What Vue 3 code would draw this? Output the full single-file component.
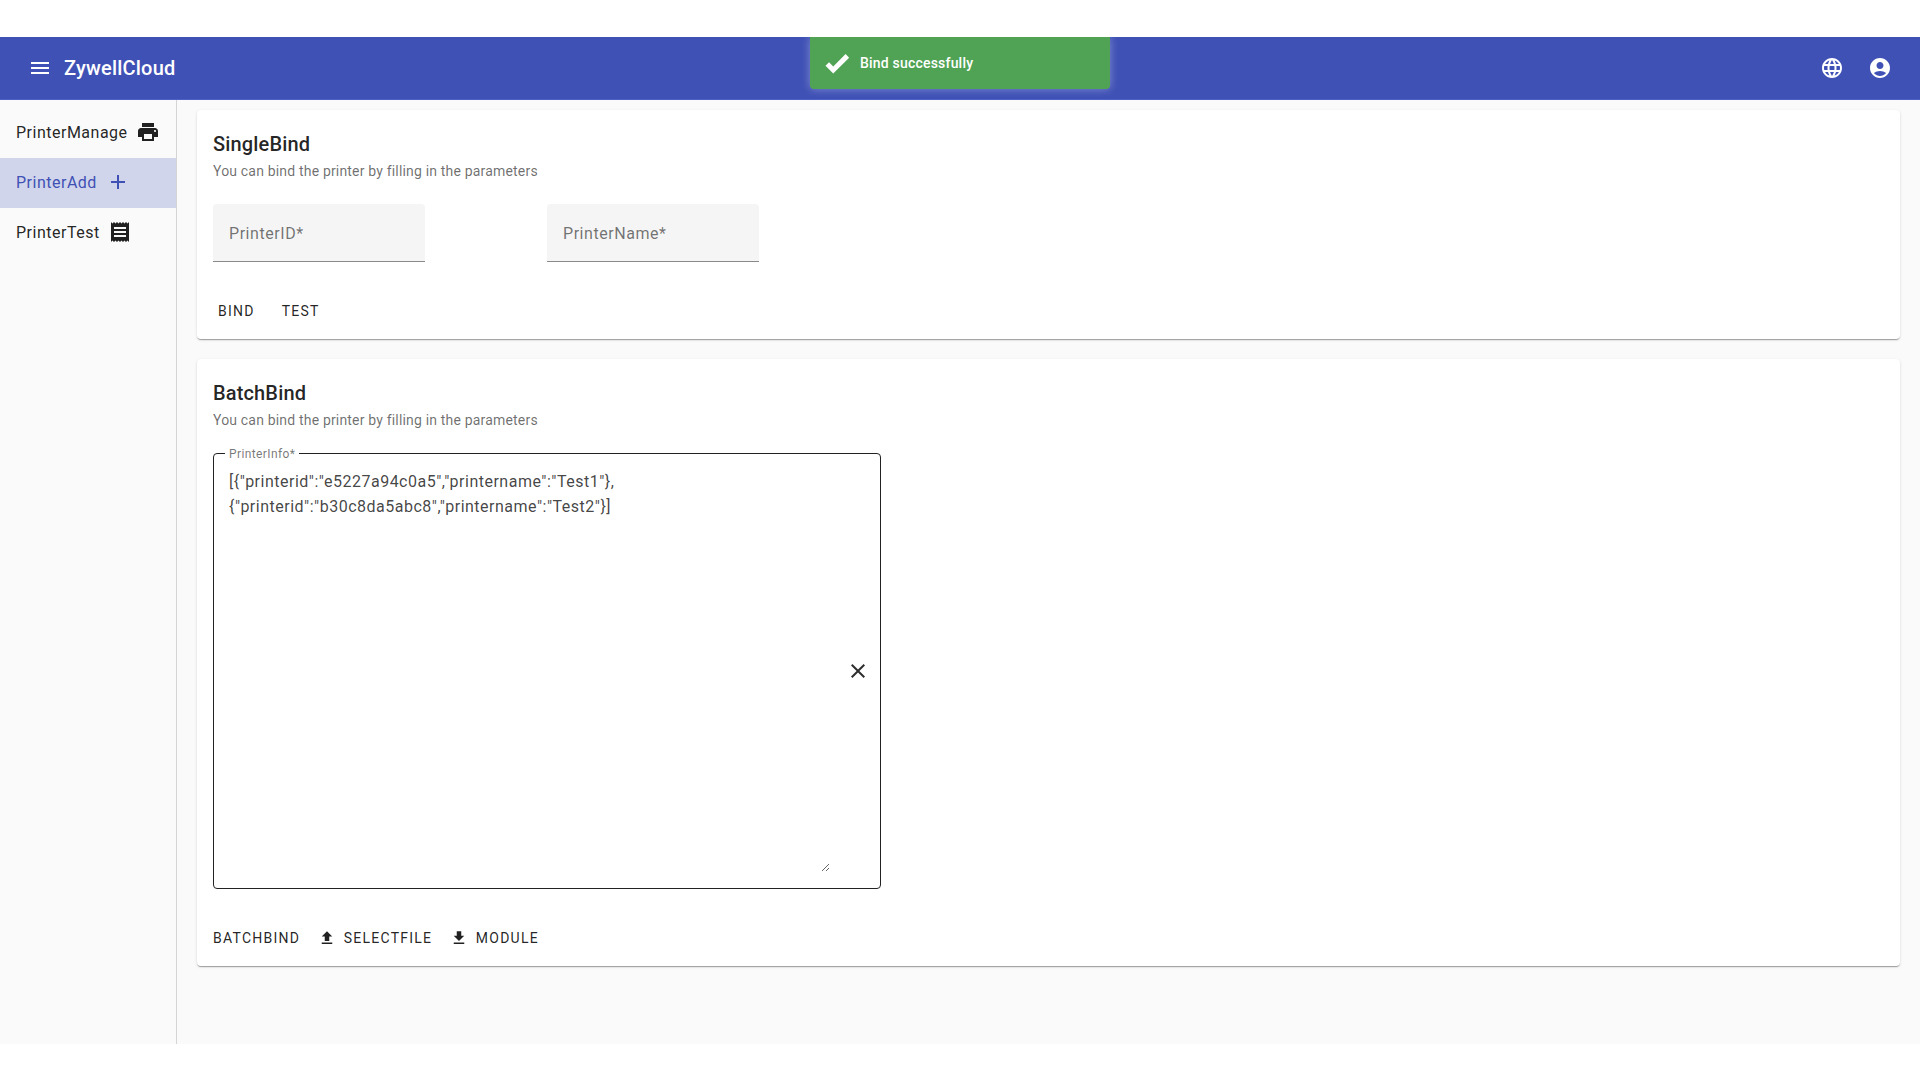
<script setup>
const items = [
  { label: 'PrinterManage', icon: 'M19 8H5c-1.66 0-3 1.34-3 3v6h4v4h12v-4h4v-6c0-1.66-1.34-3-3-3zm-3 11H8v-5h8v5zm3-7c-.55 0-1-.45-1-1s.45-1 1-1 1 .45 1 1-.45 1-1 1zm-1-9H6v4h12V3z', cls: 'first' },
  { label: 'PrinterAdd', icon: 'M19 13h-6v6h-2v-6H5v-2h6V5h2v6h6v2z', cls: 'active' },
  { label: 'PrinterTest', icon: 'M3 22l1.5-1.5L6 22l1.5-1.5L9 22l1.5-1.5L12 22l1.5-1.5L15 22l1.5-1.5L18 22l1.5-1.5L21 22V2l-1.5 1.5L18 2l-1.5 1.5L15 2l-1.5 1.5L12 2l-1.5 1.5L9 2 7.5 3.5 6 2 4.5 3.5 3 2v20zM18 17H6v-2h12v2zm0-4H6v-2h12v2zm0-4H6V7h12v2z', cls: '' }
]
</script>

<template>
  <div class="page">
    <header class="bar">
      <svg class="menu-icon" viewBox="0 0 24 24"><path d="M3 18h18v-2H3v2zm0-5h18v-2H3v2zm0-7v2h18V6H3z" /></svg>
      <span class="brand">ZywellCloud</span>
      <span class="spacer"></span>
      <svg class="bar-icon" viewBox="0 0 24 24"><path d="M11.99 2C6.47 2 2 6.48 2 12s4.47 10 9.99 10C17.52 22 22 17.52 22 12S17.52 2 11.99 2zm6.93 6h-2.95c-.32-1.25-.78-2.45-1.38-3.56 1.84.63 3.37 1.91 4.33 3.56zM12 4.04c.83 1.2 1.48 2.53 1.91 3.96h-3.82c.43-1.43 1.08-2.76 1.91-3.96zM4.26 14C4.1 13.36 4 12.69 4 12s.1-1.36.26-2h3.38c-.08.66-.14 1.32-.14 2 0 .68.06 1.34.14 2H4.26zm.82 2h2.95c.32 1.25.78 2.45 1.38 3.56-1.84-.63-3.37-1.9-4.33-3.56zm2.95-8H5.08c.96-1.66 2.49-2.93 4.33-3.56C8.81 5.55 8.35 6.75 8.03 8zM12 19.96c-.83-1.2-1.48-2.53-1.91-3.96h3.82c-.43 1.43-1.08 2.76-1.91 3.96zM14.34 14H9.66c-.09-.66-.16-1.32-.16-2 0-.68.07-1.35.16-2h4.68c.09.65.16 1.32.16 2 0 .68-.07 1.34-.16 2zm.25 5.56c.6-1.11 1.06-2.31 1.38-3.56h2.95c-.96 1.65-2.49 2.93-4.33 3.56zM16.36 14c.08-.66.14-1.32.14-2 0-.68-.06-1.34-.14-2h3.38c.16.64.26 1.31.26 2s-.1 1.36-.26 2h-3.38z" /></svg>
      <svg class="bar-icon" viewBox="0 0 24 24"><path d="M12 2C6.48 2 2 6.48 2 12s4.48 10 10 10 10-4.48 10-10S17.52 2 12 2zm0 4c1.93 0 3.5 1.57 3.5 3.5S13.93 13 12 13s-3.5-1.57-3.5-3.5S10.07 6 12 6zm0 14c-2.03 0-4.43-.82-6.14-2.88C7.55 15.8 9.68 15 12 15s4.45.8 6.14 2.12C16.43 19.18 14.03 20 12 20z" /></svg>
      <div class="toast">
        <svg class="toast-icon" viewBox="0 0 24 24"><path d="M9 20.42L2.79 14.21 5.62 11.38 9 14.77 18.88 4.88 21.71 7.71z" /></svg>
        <span>Bind successfully</span>
      </div>
    </header>
    <div class="main">
      <nav class="side">
        <div v-for="item in items" :key="item.label" class="nav-item" :class="item.cls">
          <span>{{ item.label }}</span>
          <svg class="nav-icon" viewBox="0 0 24 24"><path :d="item.icon" /></svg>
        </div>
      </nav>
      <section class="content">
        <div class="card single">
          <h2 class="title">SingleBind</h2>
          <p class="sub">You can bind the printer by filling in the parameters</p>
          <div class="fields">
            <div class="field">PrinterID*</div>
            <div class="field">PrinterName*</div>
          </div>
          <div class="actions first-actions">
            <button class="btn">BIND</button>
            <button class="btn">TEST</button>
          </div>
        </div>
        <div class="card batch">
          <h2 class="title">BatchBind</h2>
          <p class="sub">You can bind the printer by filling in the parameters</p>
          <div class="outline">
            <span class="outline-label">PrinterInfo*</span>
            <textarea class="area" readonly spellcheck="false">[{"printerid":"e5227a94c0a5","printername":"Test1"},{"printerid":"b30c8da5abc8","printername":"Test2"}]</textarea>
            <svg class="clear" viewBox="0 0 24 24"><path d="M19 6.41L17.59 5 12 10.59 6.41 5 5 6.41 10.59 12 5 17.59 6.41 19 12 13.41 17.59 19 19 17.59 13.41 12z" /></svg>
          </div>
          <div class="actions second-actions">
            <button class="btn">BATCHBIND</button>
            <button class="btn">
              <svg class="btn-icon" viewBox="0 0 24 24"><path d="M9 16h6v-6h4l-7-7-7 7h4v6zm-4 2h14v2H5z" /></svg>
              SELECTFILE
            </button>
            <button class="btn">
              <svg class="btn-icon" viewBox="0 0 24 24"><path d="M19 9h-4V3H9v6H5l7 7 7-7zM5 18v2h14v-2H5z" /></svg>
              MODULE
            </button>
          </div>
        </div>
      </section>
    </div>
  </div>
</template>

<style>
html, body { margin: 0; background: #fff; }
</style>

<style scoped>
.page {
  width: 1920px;
  height: 1080px;
  padding-top: 37px;
  box-sizing: border-box;
  font-family: Roboto, "Liberation Sans", sans-serif;
  color: rgba(0, 0, 0, 0.87);
  overflow: hidden;
}
.bar {
  position: relative;
  height: 63px;
  background: #3f51b5;
  display: flex;
  align-items: center;
  padding: 0 28px 0 28px;
  color: #fff;
  box-sizing: border-box;
  border-bottom: 1px solid #4f60c4;
}
.menu-icon { width: 24px; height: 24px; fill: #fff; margin-right: 12px; }
.brand { font-size: 20px; font-weight: 500; letter-spacing: 0.2px; }
.spacer { flex: 1; }
.bar-icon { width: 24px; height: 24px; fill: #fff; margin-left: 24px; }
.toast {
  position: absolute;
  left: 810px;
  top: 0;
  width: 300px;
  height: 52px;
  background: #50a354;
  border-radius: 0 0 4px 4px;
  box-shadow: 0 0 8px rgba(255, 255, 255, 0.35);
  display: flex;
  align-items: center;
  padding-left: 12px;
  box-sizing: border-box;
  font-size: 14px;
  font-weight: 500;
  letter-spacing: 0.2px;
  color: #fff;
}
.toast-icon { width: 30px; height: 30px; fill: #fff; margin-right: 8px; }
.main {
  display: flex;
  height: 944px;
  background: #fafafa;
}
.side {
  width: 177px;
  flex: none;
  box-sizing: border-box;
  border-right: 1px solid #d5d5d5;
}
.nav-item {
  display: flex;
  align-items: center;
  height: 50px;
  padding-left: 16px;
  padding-bottom: 2px;
  box-sizing: border-box;
  font-size: 16px;
  letter-spacing: 0.5px;
}
.nav-item.first { height: 58px; padding-top: 6px; padding-bottom: 0; }
.nav-item.active { background: #d1d5eb; color: #3f51b5; }
.nav-item.active .nav-icon { margin-left: 9px; }
.nav-icon { width: 24px; height: 24px; margin-left: 8px; fill: currentColor; }
.content {
  flex: 1;
  padding: 10px 20px 0;
  display: flex;
  flex-direction: column;
  gap: 20px;
}
.card {
  background: #fff;
  border-radius: 4px;
  padding: 16px;
  box-shadow: 0 2px 1px -1px rgba(0, 0, 0, 0.2), 0 1px 1px 0 rgba(0, 0, 0, 0.14), 0 1px 3px 0 rgba(0, 0, 0, 0.12);
  box-sizing: border-box;
}
.single { height: 229px; }
.batch { height: 607px; }
.title {
  margin: 2px 0 0;
  font-size: 20px;
  font-weight: 500;
  line-height: 33px;
  letter-spacing: 0.15px;
}
.sub {
  margin: 0;
  font-size: 14px;
  line-height: 21px;
  letter-spacing: 0.18px;
  color: rgba(0, 0, 0, 0.58);
}
.fields { display: flex; gap: 122px; margin-top: 22px; }
.field {
  width: 212px;
  height: 58px;
  box-sizing: border-box;
  background: #f5f5f5;
  border-radius: 4px 4px 0 0;
  border-bottom: 1px solid #8a8a8a;
  padding-left: 16px;
  padding-top: 1px;
  display: flex;
  align-items: center;
  font-size: 16px;
  letter-spacing: 0.55px;
  color: rgba(0, 0, 0, 0.55);
}
.actions { display: flex; align-items: center; }
.first-actions { margin-top: 31px; gap: 27px; padding-left: 5px; }
.second-actions { margin-top: 31px; gap: 17.5px; }
.btn {
  display: flex;
  align-items: center;
  height: 36px;
  border: 0;
  background: none;
  padding: 0;
  font-family: inherit;
  font-size: 14px;
  font-weight: 400;
  letter-spacing: 1.25px;
  color: rgba(0, 0, 0, 0.87);
}
.btn-icon { width: 18px; height: 18px; fill: currentColor; margin-right: 8px; }
.outline {
  position: relative;
  width: 668px;
  height: 436px;
  margin-top: 22px;
  box-sizing: border-box;
  border: 1px solid #222;
  border-radius: 4px;
}
.outline-label {
  position: absolute;
  left: 11px;
  top: -7px;
  padding: 0 4px;
  background: #fff;
  font-size: 12px;
  line-height: 14px;
  letter-spacing: 0.4px;
  color: rgba(0, 0, 0, 0.55);
}
.area {
  position: absolute;
  left: 15px;
  top: 15px;
  width: 601px;
  height: 403px;
  padding: 0;
  border: 0;
  outline: 0;
  resize: both;
  background: transparent;
  font-family: inherit;
  font-size: 16px;
  line-height: 25px;
  letter-spacing: 0.5px;
  color: rgba(0, 0, 0, 0.74);
}
.clear {
  position: absolute;
  right: 10px;
  top: 205px;
  width: 24px;
  height: 24px;
  fill: rgba(0, 0, 0, 0.82);
}
</style>
